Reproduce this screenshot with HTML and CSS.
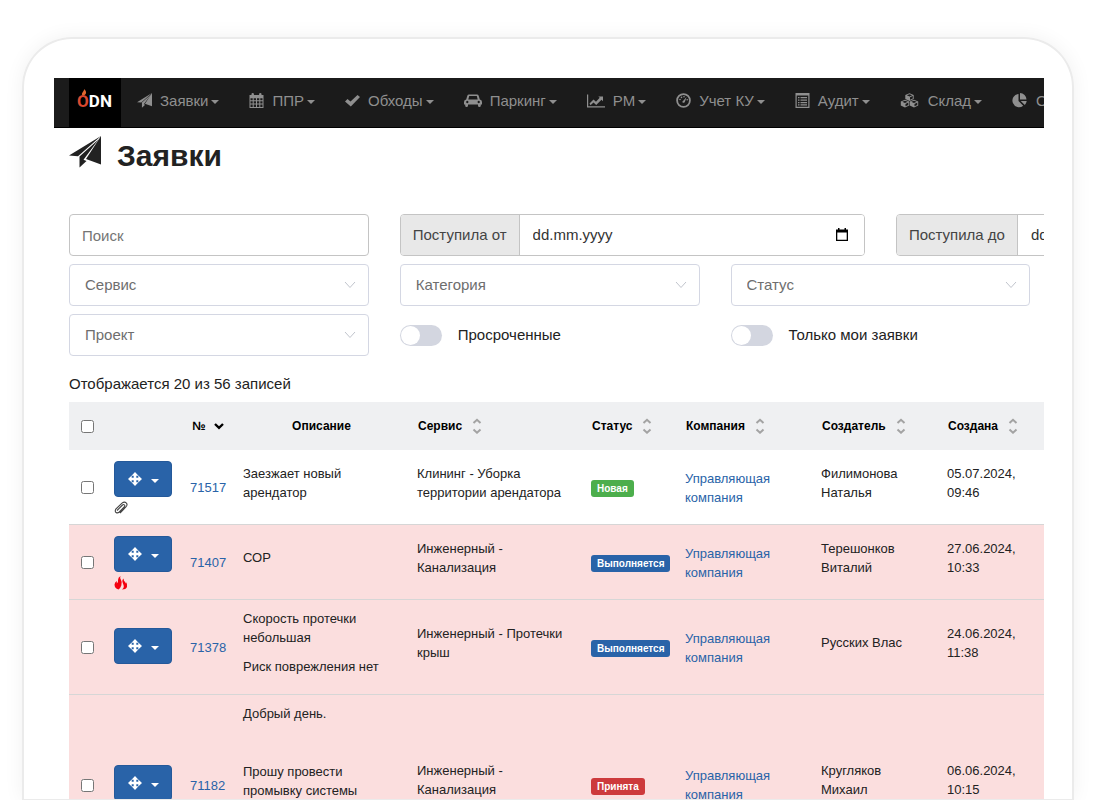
FILE: index.html
```html
<!DOCTYPE html>
<html lang="ru">
<head>
    <meta charset="UTF-8">
    <meta name="viewport" content="width=device-width, initial-scale=1.0">
    <title>Заявки</title>
    <link rel="stylesheet" href="styles.css">
</head>
<body>
    <!-- Shared icons -->
    <svg class="icon-defs" aria-hidden="true">
        <symbol id="i-send" viewBox="0 0 32 32">
            <path d="M32 0L0 19.500l9 .8zM29.500 3.500L10.500 20.500V31.500L17.500 25l-3-1.200zM32 0V28.500L17 23z"/>
        </symbol>
        <symbol id="i-move" viewBox="0 0 14 14">
            <path d="M7 0l3.500 3.700H8.300v2h2V3.500L14 7l-3.700 3.500V8.300h-2v2h2.200L7 14l-3.500-3.700h2.200v-2h-2v2.200L0 7l3.700-3.500v2.200h2v-2H3.500z"/>
        </symbol>
        <symbol id="i-sort" viewBox="0 0 10 16">
            <path d="M1.500 5L5 1.800 8.500 5M1.500 11.500L5 14.700l3.500-3.200" fill="none" stroke="currentColor" stroke-width="2"/>
        </symbol>
        <symbol id="i-date" viewBox="0 0 12 14">
            <path d="M2 0h1.500v1.500h5V0H10v1.500h2V13H0V1.500h2zM1.300 4.500v7.200h9.400V4.500z" fill-rule="evenodd"/>
        </symbol>
    </svg>

    <div class="frame">
        <div class="screen">
            <!-- Navbar -->
            <nav class="navbar">
                <a class="brand" href="#"><span class="brand-o">O<svg class="flame" viewBox="0 0 5 5"><path d="M1 5C0 3 3 2 2.500 0 5 2 4.500 4 3 5z"/></svg></span>DN</a>
                <a class="nav-item" href="#"><svg class="icon" viewBox="0 0 32 32"><use href="#i-send"/></svg>Заявки<span class="caret"></span></a>
                <a class="nav-item" href="#"><svg class="icon" viewBox="0 0 14 15"><path d="M0 2h2V1q0-1 1.200-1T4.400 1v1h5.200V1q0-1 1.200-1T12 1v1h2v13H0zM1 5.300v2h2.200v-2zM4.200 5.300v2h2.300v-2zM7.500 5.300v2h2.300v-2zM10.800 5.300v2H13v-2zM1 8.300v2.200h2.200V8.300zM4.200 8.300v2.200h2.300V8.300zM7.500 8.300v2.200h2.300V8.300zM10.800 8.300v2.200H13V8.300zM1 11.500V14h2.200v-2.500zM4.200 11.500V14h2.300v-2.500zM7.500 11.500V14h2.300v-2.500zM10.800 11.500V14H13v-2.500z" fill-rule="evenodd"/></svg>ППР<span class="caret"></span></a>
                <a class="nav-item" href="#"><svg class="icon" viewBox="0 0 15 14"><path d="M0 8l2.500-2.500L5.500 8 12.500 1.500 15 3.500 5.800 13z"/></svg>Обходы<span class="caret"></span></a>
                <a class="nav-item" href="#"><svg class="icon icon-wide" viewBox="0 0 18 14"><path d="M5 1h8q1.300 0 1.700 1.200L15.800 6Q18 6.300 18 8.500V11h-1.200v1q0 1.500-1.400 1.500T14 12v-1H4v1q0 1.500-1.400 1.500T1.200 12v-1H0V8.500Q0 6.300 2.200 6l1.100-3.800Q3.700 1 5 1zM5.200 2.500L4.300 6h9.400l-.9-3.500zM3.300 7.300a1.200 1.200 0 1 0 .01 0zM14.700 7.300a1.200 1.200 0 1 0 .01 0z" fill-rule="evenodd"/></svg>Паркинг<span class="caret"></span></a>
                <a class="nav-item" href="#"><svg class="icon icon-wide" viewBox="0 0 18 14"><path d="M.6 1v12.400H18" fill="none" stroke="currentColor" stroke-width="1.200"/><path d="M2.500 10L6.500 6 9 8.300l3.700-4L11.300 3H16v4.700l-1.500-1.500L9.200 11.500 6.500 9l-3 2.800z"/></svg>РМ<span class="caret"></span></a>
                <a class="nav-item" href="#"><svg class="icon" viewBox="0 0 15 15"><circle cx="7.500" cy="7.500" r="6.400" fill="none" stroke="currentColor" stroke-width="1.800"/><path d="M6.500 9.500Q6 8 7.500 7.500L10.500 4 9 8.500Q8.500 10.500 6.500 9.500z"/><circle cx="4" cy="6.500" r=".8"/><circle cx="5.500" cy="4.400" r=".8"/><circle cx="8" cy="3.700" r=".8"/><circle cx="11.200" cy="6.800" r=".8"/></svg>Учет КУ<span class="caret"></span></a>
                <a class="nav-item" href="#"><svg class="icon" viewBox="0 0 15 15"><path d="M.5 0h14v15H.5zM1.700 2.500v11.300h11.600V2.500zM3 4h1.500v1.300H3zM5.500 4H12v1.300H5.500zM3 6.500h1.500v1.300H3zM5.500 6.500H12v1.300H5.500zM3 9h1.500v1.300H3zM5.500 9H12v1.300H5.500zM3 11.300h1.500v1.200H3zM5.500 11.300H12v1.200H5.500z" fill-rule="evenodd"/></svg>Аудит<span class="caret"></span></a>
                <a class="nav-item" href="#"><svg class="icon icon-wider" viewBox="0 0 20 15"><path d="M9.500.2L13.700 2v4L9.500 8 5.300 6V2zM6.800 2.300l2.700 1.200 2.700-1.200L9.500 1.200zM10 4.300v2.500L12.800 5.500V3.100zM5 6.700l4.200 1.800v4L5 14.500l-4.200-2v-4zM2.300 8.800L5 10l2.700-1.200L5 7.700zM5.500 10.900v2.400L8.300 12V9.600zM14 6.700l4.200 1.800v4L14 14.500l-4.200-2v-4zM11.300 8.800L14 10l2.700-1.200L14 7.700zM14.500 10.900v2.400l2.800-1.300V9.600z" fill-rule="evenodd"/></svg>Склад<span class="caret"></span></a>
                <a class="nav-item" href="#"><svg class="icon icon-pie" viewBox="0 0 16 15"><path d="M6.500 1v7l4.700 4.700A6.600 6.600 0 1 1 6.500 1zM8 0a6.600 6.600 0 0 1 6.500 6.500H8zM8.700 8h6a7 7 0 0 1-1.900 4z"/></svg>Отчеты<span class="caret"></span></a>
            </nav>

            <main class="page">
                <h1><svg class="title-icon" viewBox="0 0 32 32"><use href="#i-send"/></svg>Заявки</h1>

                <!-- Filters -->
                <form class="filters">
                    <input class="field" type="text" placeholder="Поиск" aria-label="Поиск">
                    <div class="date-group">
                        <label for="dateFrom">Поступила от</label>
                        <input id="dateFrom" type="text" placeholder="dd.mm.yyyy">
                        <svg class="date-icon" viewBox="0 0 12 14"><use href="#i-date"/></svg>
                    </div>
                    <div class="date-group">
                        <label for="dateTo">Поступила до</label>
                        <input id="dateTo" type="text" placeholder="dd.mm.yyyy">
                        <svg class="date-icon" viewBox="0 0 12 14"><use href="#i-date"/></svg>
                    </div>
                    <select class="select first" aria-label="Сервис"><option>Сервис</option></select>
                    <select class="select" aria-label="Категория"><option>Категория</option></select>
                    <select class="select" aria-label="Статус"><option>Статус</option></select>
                    <select class="select first" aria-label="Проект"><option>Проект</option></select>
                    <label class="switch"><input type="checkbox">Просроченные</label>
                    <label class="switch"><input type="checkbox">Только мои заявки</label>
                </form>

                <p class="summary">Отображается 20 из 56 записей</p>

                <!-- Requests table -->
                <table>
                    <colgroup>
                        <col class="c-check"><col class="c-action"><col class="c-num"><col class="c-text"><col class="c-text"><col class="c-status"><col class="c-company"><col class="c-author"><col>
                    </colgroup>
                    <thead>
                        <tr>
                            <th><input type="checkbox" aria-label="Выбрать все"></th>
                            <th></th>
                            <th class="center">№<svg class="sort-down" viewBox="0 0 10 8"><path d="M1 2l4 3.800L9 2" fill="none" stroke="currentColor" stroke-width="2.400"/></svg></th>
                            <th class="center">Описание</th>
                            <th>Сервис<svg class="sort" viewBox="0 0 10 16"><use href="#i-sort"/></svg></th>
                            <th>Статус<svg class="sort" viewBox="0 0 10 16"><use href="#i-sort"/></svg></th>
                            <th>Компания<svg class="sort" viewBox="0 0 10 16"><use href="#i-sort"/></svg></th>
                            <th>Создатель<svg class="sort" viewBox="0 0 10 16"><use href="#i-sort"/></svg></th>
                            <th>Создана<svg class="sort" viewBox="0 0 10 16"><use href="#i-sort"/></svg></th>
                        </tr>
                    </thead>
                    <tbody>
                        <tr>
                            <td><input type="checkbox" aria-label="71517"></td>
                            <td>
                                <button class="btn" type="button" aria-label="Действия"><svg class="move" viewBox="0 0 14 14"><use href="#i-move"/></svg><span class="caret"></span></button>
                                <svg class="mark" viewBox="0 0 14 14"><path d="M3 9.500L8.500 4q1.200-1 2 0t-.3 2L5.300 11q-1.700 1.500-3.200.5t-.3-3.500L8 2.200q2.400-2 4.200-.3t-.3 4.100L6 12" fill="none" stroke="#444" stroke-width="1.100"/></svg>
                            </td>
                            <td><a href="#">71517</a></td>
                            <td><p>Заезжает новый арендатор</p></td>
                            <td><p>Клининг - Уборка территории арендатора</p></td>
                            <td><span class="badge green">Новая</span></td>
                            <td><a href="#">Управляющая компания</a></td>
                            <td><p>Филимонова Наталья</p></td>
                            <td><p>05.07.2024,<br>09:46</p></td>
                        </tr>
                        <tr class="overdue">
                            <td><input type="checkbox" aria-label="71407"></td>
                            <td>
                                <button class="btn" type="button" aria-label="Действия"><svg class="move" viewBox="0 0 14 14"><use href="#i-move"/></svg><span class="caret"></span></button>
                                <svg class="mark" viewBox="0 0 14 14"><path d="M6.500 0Q5.500 2 7 4t.3 5.500T4.500 13.500Q.5 12.500.5 8.500.8 6 2.800 5v2.500Q4.500 6.500 4 4 4 1.500 6.500 0zM8 13.500Q10.500 11.500 9.500 9T8.300 5q0-1.500 1.200-2.500 0 2 1.500 3.500v1.500q.8-.5.8-1.800Q14 8.500 13 11T8 13.500z" fill="#f4000f"/></svg>
                            </td>
                            <td><a href="#">71407</a></td>
                            <td><p>СОР</p></td>
                            <td><p>Инженерный - Канализация</p></td>
                            <td><span class="badge blue">Выполняется</span></td>
                            <td><a href="#">Управляющая компания</a></td>
                            <td><p>Терешонков Виталий</p></td>
                            <td><p>27.06.2024,<br>10:33</p></td>
                        </tr>
                        <tr class="overdue">
                            <td><input type="checkbox" aria-label="71378"></td>
                            <td><button class="btn" type="button" aria-label="Действия"><svg class="move" viewBox="0 0 14 14"><use href="#i-move"/></svg><span class="caret"></span></button></td>
                            <td><a href="#">71378</a></td>
                            <td><p>Скорость протечки небольшая</p><p>Риск поврежления нет</p></td>
                            <td><p>Инженерный - Протечки крыш</p></td>
                            <td><span class="badge blue">Выполняется</span></td>
                            <td><a href="#">Управляющая компания</a></td>
                            <td><p>Русских Влас</p></td>
                            <td><p>24.06.2024,<br>11:38</p></td>
                        </tr>
                        <tr class="overdue tall">
                            <td><input type="checkbox" aria-label="71182"></td>
                            <td><button class="btn" type="button" aria-label="Действия"><svg class="move" viewBox="0 0 14 14"><use href="#i-move"/></svg><span class="caret"></span></button></td>
                            <td><a href="#">71182</a></td>
                            <td class="top"><p>Добрый день.</p><p><br></p><p>Прошу провести промывку системы</p></td>
                            <td><p>Инженерный - Канализация</p></td>
                            <td><span class="badge red">Принята</span></td>
                            <td><a href="#">Управляющая компания</a></td>
                            <td><p>Кругляков Михаил</p></td>
                            <td><p>06.06.2024,<br>10:15</p></td>
                        </tr>
                    </tbody>
                </table>
            </main>
        </div>
    </div>
</body>
</html>
```

FILE: styles.css
```css
/* General Styles */
* {
    box-sizing: border-box;
}

body {
    font-family: "Liberation Sans", Arial, sans-serif;
    font-size: 15px;
    line-height: 20px;
    color: #222;
    margin: 0;
    padding: 37px 26px 0 22px;
    height: 100vh;
    overflow: hidden;
    background-color: #fff;
}

svg {
    fill: currentColor;
}

.icon-defs {
    display: none;
}

a {
    color: #2963a8;
    text-decoration: none;
}

/* Device frame */
.frame {
    height: 100%;
    padding: 39px 28px 0 30px;
    border: 2px solid #ebebeb;
    border-bottom-width: 1px;
    border-radius: 50px 50px 0 0;
    box-shadow: 0 0 20px rgba(0, 0, 0, 0.06);
}

.screen {
    height: 100%;
    overflow: hidden;
}

/* Navbar */
.navbar {
    display: flex;
    align-items: stretch;
    width: max-content;
    min-width: 100%;
    height: 50px;
    padding-left: 15px;
    background-color: #1b1b1b;
    border-bottom: 1px solid #000;
}

.brand {
    width: 52px;
    padding: 11px 9px 0 8px;
    background-color: #000;
    color: #fff;
    font-family: Roboto, sans-serif;
    font-size: 17px;
    font-weight: 700;
    line-height: 24px;
    text-align: center;
    white-space: nowrap;
}

.brand-o {
    position: relative;
    color: #d9482f;
}

.flame {
    position: absolute;
    left: 4px;
    top: -2px;
    width: 6px;
    height: 6px;
    fill: #e0662f;
}

.nav-item {
    display: flex;
    align-items: center;
    flex: none;
    padding: 0 14px 4px 16px;
    color: #8f8f8f;
}

.icon {
    width: 15px;
    height: 15px;
    margin-right: 8px;
}

.icon-pie {
    width: 16px;
}

.icon-wide {
    width: 18px;
}

.icon-wider {
    width: 20px;
}

.caret {
    border-top: 4px solid currentColor;
    border-left: 4px solid transparent;
    border-right: 4px solid transparent;
}

.nav-item .caret {
    margin: 2px 0 0 3px;
}

/* Page */
.page {
    width: 1320px;
    padding: 0 13px 0 15px;
}

h1 {
    display: flex;
    align-items: flex-start;
    gap: 16px;
    margin: 0 0 38px;
    padding-top: 8px;
    font-size: 30px;
    line-height: 40px;
}

.title-icon {
    width: 32px;
    height: 32px;
}

/* Filters */
.filters {
    display: grid;
    grid-template-columns: repeat(8, 1fr);
    gap: 8px 31px;
}

.filters > * {
    grid-column: span 2;
    height: 42px;
}

.filters > .first {
    grid-column: 1 / span 2;
}

.filters > .date-group {
    grid-column: span 3;
}

.field,
.date-group {
    border: 1px solid #c4c4c4;
    border-radius: 4px;
    background-color: #fff;
}

.filters input,
.select {
    font: inherit;
    color: #333;
}

.field {
    padding: 0 12px;
}

.field::placeholder {
    color: #757575;
    opacity: 1;
}

.date-group {
    position: relative;
    display: flex;
    overflow: hidden;
}

.date-group label {
    padding: 10px 12px;
    background-color: #e8e8e8;
    border-right: 1px solid #c4c4c4;
    color: #444;
}

.date-group input {
    flex: 1;
    min-width: 0;
    padding: 0 13px;
    border: 0;
}

.date-group input::placeholder {
    color: #333;
    opacity: 1;
}

.date-icon {
    position: absolute;
    right: 16px;
    top: 13px;
    width: 12px;
    height: 14px;
    color: #000;
}

.select {
    appearance: none;
    padding: 0 15px;
    border: 1px solid #d4d7e3;
    border-radius: 4px;
    color: #6e6e6e;
    background: #fff url("data:image/svg+xml,%3Csvg xmlns='http://www.w3.org/2000/svg' width='12' height='8' fill='none' stroke='%23c0c4cc'%3E%3Cpath d='M1 1l5 5.500L11 1'/%3E%3C/svg%3E") no-repeat right 12px center;
}

.switch {
    display: flex;
    align-items: center;
    gap: 16px;
}

.switch input {
    appearance: none;
    width: 42px;
    height: 21px;
    margin: 0;
    padding: 1px;
    border-radius: 11px;
    background-color: #d3d6e0;
}

.switch input::before {
    content: "";
    display: block;
    width: 19px;
    height: 19px;
    border-radius: 50%;
    background-color: #fff;
}

.summary {
    margin: 18px 0 8px;
}

/* Table */
table {
    width: 100%;
    table-layout: fixed;
    border-collapse: separate;
    border-spacing: 0;
    font-size: 13px;
    line-height: 19px;
}

.c-check { width: 38px; }
.c-action { width: 76px; }
.c-num { width: 53px; }
.c-text { width: 174px; }
.c-status { width: 94px; }
.c-company { width: 136px; }
.c-author { width: 126px; }

th {
    height: 48px;
    padding: 0 8px;
    background-color: #eff0f2;
    color: #000;
    font-size: 12px;
    text-align: left;
    white-space: nowrap;
}

th.center {
    padding: 0 10px 0 7px;
    text-align: center;
}

.sort {
    width: 10px;
    height: 16px;
    margin-left: 10px;
    vertical-align: middle;
    color: #a3a3a3;
}

.sort-down {
    width: 10px;
    height: 8px;
    margin-left: 8px;
}

td {
    height: 75px;
    padding: 9px 10px 8px 7px;
    border-bottom: 1px solid #d6d6d6;
}

td p {
    margin: 0 0 10px;
}

.overdue td {
    background-color: #fbdede;
}

.tall td {
    height: 180px;
}

td.top {
    vertical-align: top;
}

td input,
th input {
    display: block;
    width: 13px;
    height: 13px;
    margin: 0 0 0 5px;
}

th input {
    margin-left: 4px;
}

.btn {
    display: flex;
    align-items: center;
    justify-content: center;
    gap: 9px;
    width: 58px;
    height: 36px;
    margin-bottom: 4px;
    padding: 0;
    border: 1px solid #24599a;
    border-radius: 4px;
    background-color: #2963a8;
    color: #fff;
}

.move {
    width: 14px;
    height: 14px;
}

.btn .caret {
    margin-top: 4px;
}

.mark {
    display: block;
    width: 14px;
    height: 14px;
}

.badge {
    display: inline-block;
    padding: 0 6px;
    border-radius: 3px;
    color: #fff;
    font-size: 10px;
    font-weight: bold;
    line-height: 17px;
    white-space: nowrap;
}

.green { background-color: #4cae4c; }
.blue { background-color: #2963a8; }
.red { background-color: #cd3a3c; }
```
